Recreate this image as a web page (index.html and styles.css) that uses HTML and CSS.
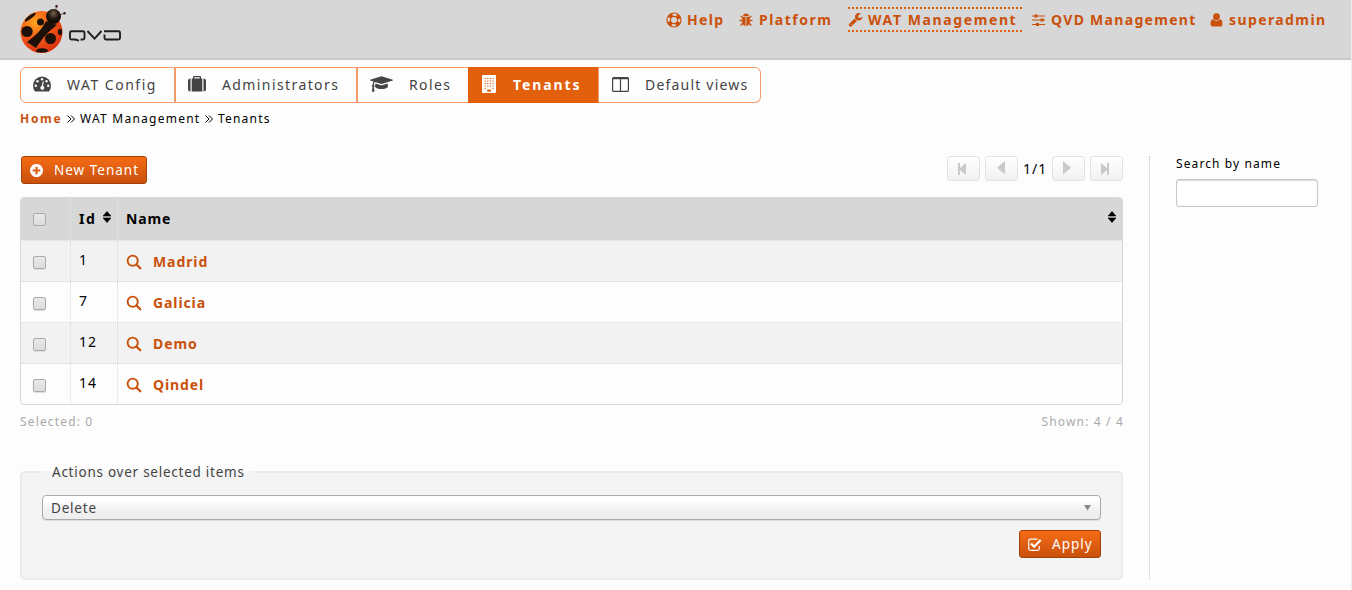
FILE: index.html
```html
<!DOCTYPE html>
<html lang="en">
<head>
<meta charset="utf-8">
<title>QVD WAT - Tenants</title>
<link rel="stylesheet" href="styles.css">
</head>
<body>
<svg class="defs" width="0" height="0">
  <defs>
    <symbol id="search" viewBox="0 0 16 16"><circle cx="6.700" cy="6.700" r="5.100" fill="none" stroke="currentColor" stroke-width="1.900"/><path d="M10.500 10.500l3.800 3.800" stroke="currentColor" stroke-width="2.300" stroke-linecap="round"/></symbol>
    <symbol id="sort" viewBox="0 0 8 12"><path d="M0 5L4 0.500L8 5zM0 7h8L4 11.500z" stroke="currentColor" stroke-width=".6" stroke-linejoin="round"/></symbol>
    <radialGradient id="shell" cx=".35" cy=".28" r=".8"><stop offset="0" stop-color="#ffa51c"/><stop offset=".45" stop-color="#f45b17"/><stop offset="1" stop-color="#d92d10"/></radialGradient>
    <radialGradient id="head" cx=".5" cy=".3" r=".6"><stop offset="0" stop-color="#75614f"/><stop offset=".6" stop-color="#20150d"/><stop offset="1" stop-color="#100b08"/></radialGradient>
    <clipPath id="shellclip"><circle cx="21.500" cy="27" r="20.500"/></clipPath>
  </defs>
</svg>

<header class="header">
  <svg class="logo" viewBox="0 0 102 50" width="102" height="50">
    <circle cx="21.500" cy="27" r="21" fill="url(#shell)"/>
    <g clip-path="url(#shellclip)" fill="#1c120b">
      <path d="M26 16L37 20C29 26 24 31 16 43L7 37C15 31 21 26 26 16z"/>
      <path d="M28 18.500C24 27 18 33 10.500 38.500M34 19C27 24 21 31 15 41" fill="none" stroke="#1c120b" stroke-width="1"/>
      <ellipse cx="7" cy="26.500" rx="5.700" ry="5.500"/>
      <circle cx="20.500" cy="17" r="3.500"/>
      <path d="M5 14Q10 7 16 8Q15 12 5 17z"/>
      <circle cx="30.500" cy="33.500" r="5.500"/>
      <circle cx="41" cy="27" r="3.200"/>
      <ellipse cx="22" cy="46" rx="6" ry="2.800"/>
    </g>
    <path d="M35 7L36.500 2M39 10L44 8.500" stroke="#796f69" stroke-width="1"/>
    <circle cx="36.500" cy="1.200" r="1.200" fill="#36150c"/><circle cx="44.500" cy="8.300" r="1.200" fill="#36150c"/>
    <circle cx="33.500" cy="11.500" r="7.500" fill="url(#head)"/>
    <g fill="none" stroke="#202020" stroke-width="1.900"><path d="M56.500 34.500H51.500Q50 34.500 50 33V28Q50 26.300 51.500 26.300H63Q64.500 26.300 64.500 28V33Q64.500 34.500 63 34.500H60.500M55 34.500L59 35.700"/><path d="M67.500 26L74.500 33.700L81.500 26"/><path d="M84.500 29.500V33Q84.500 34.500 86 34.500H98.500Q100 34.500 100 33V28Q100 26.300 98.500 26.300H84"/></g>
  </svg>
  <nav class="topnav">
    <a class="t-help"><svg width="16" height="16" viewBox="0 0 16 16" fill="none" stroke="currentColor"><circle cx="8" cy="8" r="7" stroke-width="1.200"/><circle cx="8" cy="8" r="3.600" stroke-width="1.200"/><circle cx="8" cy="8" r="5.300" stroke-width="3.600" stroke-dasharray="4.163 4.163" stroke-dashoffset="-2.081"/></svg><span>Help</span></a>
    <a class="t-platform"><svg width="14" height="14" viewBox="0 0 14 14" fill="currentColor"><path d="M4 3.300Q4.200.6 7 .6T10 3.300zM3.200 4h3.400v8.900Q3.200 12.700 3.200 9zM7.400 4h3.400v5Q10.800 12.700 7.400 12.900z"/><path d="M4 5L1.700 3M3.700 7.500H.5M4 10L1.700 12.500M10 5l2.300-2M10.300 7.500h3.200M10 10l2.300 2.500" stroke="currentColor" stroke-width="1.300" fill="none"/></svg><span>Platform</span></a>
    <a class="t-wat"><svg width="15" height="15" viewBox="0 0 1792 1792" fill="currentColor"><path d="M448 1472q0-26-19-45t-45-19-45 19-19 45 19 45 45 19 45-19 19-45zm644-420l-682 682q-37 37-90 37-52 0-91-37l-106-108q-38-36-38-90 0-53 38-91l681-681q39 98 114.500 173.500t173.500 114.500zm634-435q0 39-23 106-47 134-164.500 217.500t-258.500 83.500q-185 0-316.500-131.500t-131.500-316.500 131.500-316.500 316.500-131.500q58 0 121.500 16.500t107.500 46.500q16 11 16 28t-16 28l-293 169v224l193 107q5-3 79-48.500t135.500-81 70.500-35.500q15 0 23.500 10t8.500 25z"/></svg><span>WAT Management</span></a>
    <a class="t-qvd"><svg width="14" height="14" viewBox="0 0 14 14"><path d="M0 3h13M0 7h13M0 11.500h13" stroke="currentColor" stroke-width="1.200"/><path d="M2.500 1.500h3v3h-3zM8.500 5.500h3v3h-3zM4 10h3v3H4z" fill="currentColor"/></svg><span>QVD Management</span></a>
    <a class="t-user"><svg width="13" height="14" viewBox="0 0 13 14" fill="currentColor"><path d="M3.200 6.300Q4.500 7.800 6.500 7.800T9.800 6.300Q12.500 6.500 12.500 11Q12.500 13.500 10.500 13.500h-8Q.5 13.500.5 11Q.5 6.500 3.200 6.300z"/><circle cx="6.500" cy="3.700" r="3.400"/></svg><span>superadmin</span></a>
  </nav>
</header>

<nav class="tabs">
  <a class="tab tab-config"><svg width="18" height="16" viewBox="0 0 18 16"><path d="M2 15.500Q0 12.500 0 9.500A9 9 0 0 1 18 9.500Q18 12.500 16 15.500z" fill="currentColor"/><g fill="#fff"><circle cx="2.800" cy="9.800" r="1.200"/><circle cx="4.500" cy="5.300" r="1.200"/><circle cx="9" cy="3.300" r="1.200"/><circle cx="13.500" cy="5.300" r="1.200"/><circle cx="15.200" cy="9.800" r="1.200"/><path d="M9.800 5.500h1L10 10a2 2 0 1 1-1.300 0z"/></g></svg><span>WAT Config</span></a>
  <a class="tab tab-admin"><svg width="18" height="16" viewBox="0 0 18 16"><path d="M2.500 2.500v13Q0 15.500 0 13V5Q0 2.500 2.500 2.500zM15.500 2.500v13Q18 15.500 18 13V5Q18 2.500 15.500 2.500zM3.700 2.500H5V1Q5 0 6 0h6q1 0 1 1v1.500h1.300v13H3.700zM6.300 2.500h5.400V1.300H6.300z" fill="currentColor" fill-rule="evenodd"/></svg><span>Administrators</span></a>
  <a class="tab tab-roles"><svg width="23" height="18" viewBox="0 0 2304 1792" fill="currentColor"><path d="M1774 836l18 316q4 69-82 128t-235 93.500-323 34.500-323-34.500-235-93.500-82-128l18-316 574 181q22 7 48 7t48-7zm530-324q0 23-22 31l-1120 352q-4 1-10 1t-10-1l-652-206q-43 34-71 111.500t-34 178.500q63 36 63 109 0 69-58 107l58 433q2 14-8 25-9 11-24 11h-192q-15 0-24-11-10-11-8-25l58-433q-58-38-58-107 0-73 65-111 11-207 98-330l-333-104q-22-8-22-31t22-31l1120-352q4-1 10-1t10 1l1120 352q22 8 22 31z"/></svg><span>Roles</span></a>
  <a class="tab tab-tenants"><svg width="14" height="18" viewBox="0 0 14 18"><rect width="14" height="18" rx=".8" fill="#fff"/><path d="M2.500 3.500h9.500M2.500 6h9.500M2.500 8.500h9.500M2.500 11h9.500" stroke="#e25f0c" stroke-width="1.100" stroke-dasharray="1.300 1.300"/><path d="M2.500 13h1.200v1H2.500zM10.500 13h1.200v1h-1.200zM5.200 14.500h3.700v2.200H5.200z" fill="#e25f0c"/></svg><span>Tenants</span></a>
  <a class="tab tab-views"><svg width="17" height="15" viewBox="0 0 17 15"><path d="M1.500 0h14Q17 0 17 1.500v12Q17 15 15.500 15h-14Q0 15 0 13.500v-12Q0 0 1.500 0zM1.200 2.300v11.500h6.700V2.300zM9.100 2.300v11.500h6.700V2.300z" fill="currentColor" fill-rule="evenodd"/></svg><span>Default views</span></a>
</nav>

<div class="breadcrumb"><b>Home</b><svg width="8" height="8" viewBox="0 0 8 8"><path d="M.5.5L4 4L.5 7.500M4 .5L7.500 4L4 7.500"/></svg><span class="bc-wat">WAT Management</span><svg width="8" height="8" viewBox="0 0 8 8"><path d="M.5.5L4 4L.5 7.500M4 .5L7.500 4L4 7.500"/></svg><span class="bc-tenants">Tenants</span></div>

<div class="content">
  <main class="main">
    <div class="toolbar">
      <a class="button new"><svg width="13" height="13" viewBox="128 128 1536 1536" fill="#fff"><path d="M1344 960v-128q0-26-19-45t-45-19h-256v-256q0-26-19-45t-45-19h-128q-26 0-45 19t-19 45v256h-256q-26 0-45 19t-19 45v128q0 26 19 45t45 19h256v256q0 26 19 45t45 19h128q26 0 45-19t19-45v-256h256q26 0 45-19t19-45zm320-64q0 209-103 385.500t-279.500 279.500-385.500 103-385.500-103-279.500-279.500-103-385.500 103-385.500 279.500-279.500 385.500-103 385.500 103 279.500 279.500 103 385.500z"/></svg><span>New Tenant</span></a>
      <div class="pager">
        <a><svg width="33" height="25" viewBox="0 0 33 25"><path d="M11 7h2v5l6-5v12l-6-5v5h-2z"/></svg></a>
        <a><svg width="33" height="25" viewBox="0 0 33 25"><path d="M20 5v13.500l-8-6.700z"/></svg></a>
        <span>1/1</span>
        <a><svg width="33" height="25" viewBox="0 0 33 25"><path d="M11 5v13.500l8-6.700z"/></svg></a>
        <a><svg width="33" height="25" viewBox="0 0 33 25"><path d="M11 7v12l6-5v5h2V7h-2v5z"/></svg></a>
      </div>
    </div>
    <div class="grid">
      <div class="row head"><div class="c1"><i class="check"></i></div><div class="c2"><span>Id</span><svg width="8" height="12"><use href="#sort"/></svg></div><div class="c3"><span>Name</span><svg width="8" height="12"><use href="#sort"/></svg></div></div>
      <div class="row odd"><div class="c1"><i class="check"></i></div><div class="c2">1</div><div class="c3"><svg width="16" height="16"><use href="#search"/></svg><b>Madrid</b></div></div>
      <div class="row"><div class="c1"><i class="check"></i></div><div class="c2">7</div><div class="c3"><svg width="16" height="16"><use href="#search"/></svg><b>Galicia</b></div></div>
      <div class="row odd"><div class="c1"><i class="check"></i></div><div class="c2">12</div><div class="c3"><svg width="16" height="16"><use href="#search"/></svg><b>Demo</b></div></div>
      <div class="row"><div class="c1"><i class="check"></i></div><div class="c2">14</div><div class="c3"><svg width="16" height="16"><use href="#search"/></svg><b>Qindel</b></div></div>
    </div>
    <div class="counts"><span>Selected: 0</span><span class="shown">Shown: 4 / 4</span></div>
    <fieldset class="actions">
      <legend>Actions over selected items</legend>
      <div class="select"><span>Delete</span><svg width="7" height="6" viewBox="0 0 7 6"><path d="M0 0h7L3.500 5.500z" fill="#888"/></svg></div>
      <a class="button apply"><svg width="14" height="13" viewBox="0 0 14 13" fill="none" stroke="#fff"><path d="M9.500 1.200H2.500Q.7 1.200.7 3v7.500Q.7 12.300 2.500 12.300H9.500Q11.300 12.300 11.300 10.500V8" stroke-width="1.200"/><path d="M3 5.500l3.200 3.200L12.700 2" stroke-width="2.300"/></svg><span>Apply</span></a>
    </fieldset>
  </main>
  <aside class="side"><label>Search by name</label><input type="text"></aside>
</div>
</body>
</html>
```
FILE: styles.css
```css
* { box-sizing: border-box; }
body { margin: 0; width: 1352px; height: 590px; overflow: hidden; background: #fdfdfd; border-right: 1px solid #eee; font: 14px/20px "Noto Sans", "Open Sans", sans-serif; letter-spacing: 1px; color: #000; }
svg { flex: none; display: block; }
.defs { display: block; height: 0; }
span, b { white-space: nowrap; }
.header { height: 60px; background: #d7d7d7; border-bottom: 2px solid #cacaca; display: flex; justify-content: space-between; align-items: flex-start; padding: 5px 0 0 20px; }
.topnav { display: flex; color: #ca510b; font-weight: bold; margin-top: 2px; }
.topnav a { display: flex; align-items: center; height: 25px; border: 2px dotted transparent; border-width: 2px 0; }
.t-help { width: 73px; gap: 5px; letter-spacing: 1.3px; }
.t-platform { width: 109px; gap: 6px; letter-spacing: 1.5px; }
.t-wat { width: 174px; gap: 5px; margin-right: 10px; letter-spacing: 1.6px; }
.topnav .t-wat { border-color: #e25f0c; }
.t-qvd { width: 178px; gap: 5px; letter-spacing: 1.3px; }
.t-user { width: 141px; gap: 6px; letter-spacing: 1.4px; }
.tabs { display: flex; height: 36px; margin: 7px 0 0 20px; color: #444; }
.tab { display: flex; align-items: center; border: 1px solid #f39c67; padding-left: 12px; }
.tab svg { margin-top: -2px; }
.tab-config { width: 155px; border-radius: 6px 0 0 6px; gap: 16px; letter-spacing: 1.5px; }
.tab-admin { width: 182px; gap: 16px; letter-spacing: 1.4px; }
.tab-roles { width: 111px; gap: 16px; border-right: 0; letter-spacing: 1.4px; }
.tab-tenants { width: 131px; gap: 17px; font-weight: bold; color: #fff; background: #e25f0c; border-color: #e25f0c #f39c67 #e25f0c #e25f0c; padding-left: 13px; letter-spacing: 1.9px; }
.tab-tenants + .tab { border-left: 0; padding-left: 13px; }
.tab-views { width: 162px; gap: 16px; border-radius: 0 6px 6px 0; letter-spacing: 1.2px; }
.breadcrumb { display: flex; align-items: center; height: 18px; margin: 7px 0 0 20px; font-size: 12px; }
.breadcrumb b { color: #ca510b; width: 47px; letter-spacing: 1.7px; }
.breadcrumb svg { fill: none; stroke: #000; margin-right: 5px; }
.bc-wat { width: 125px; letter-spacing: 1.25px; }
.bc-tenants { letter-spacing: 1.2px; }
.content { display: flex; margin: 28px 0 0 20px; }
.main { width: 1103px; }
.toolbar { display: flex; justify-content: space-between; height: 41px; align-items: flex-start; }
.button { display: flex; align-items: center; height: 28px; border: 1px solid #a14208; border-radius: 3px; color: #fff; background: linear-gradient(#f56b15, #c9510c); font-size: 13.500px; letter-spacing: 1px; }
.new { width: 126px; margin-left: 1px; padding-left: 8px; gap: 11px; }
.pager { display: flex; align-items: center; }
.pager a { width: 33px; height: 25px; border: 1px solid #e3e3e3; border-radius: 3px; background: linear-gradient(#fff, #f1f1f1); }
.pager svg { margin: -1px; fill: #c9c9c9; }
.pager a + a { margin-left: 5px; }
.pager span { width: 34px; padding-left: 5px; font-size: 14px; }
.grid { height: 208px; border: 1px solid #d7d7d7; border-radius: 4px; overflow: hidden; }
.row { display: flex; height: 41px; border-bottom: 1px dotted #d5d5d5; }
.row:last-child { border-bottom: 0; }
.row.head { height: 43px; background: #d7d7d7; font-weight: bold; border-color: #f2f2f2; }
.odd { background: #f2f2f2; }
.c1 { width: 50px; border-right: 1px dotted #d9d9d9; padding: 15px 0 0 12px; }
.c2 { width: 47px; border-right: 1px dotted #d9d9d9; padding: 9px 6px 0 8px; display: flex; justify-content: space-between; }
.c3 { flex: 1; display: flex; align-items: flex-start; padding: 11px 0 0 8px; gap: 11px; color: #ca510b; }
.c3 svg { margin-top: 2px; }
.row b { letter-spacing: .9px; }
.head .c1, .head .c2 { border-color: #e7e7e7; }
.head .c2, .head .c3 { padding-top: 11px; color: #000; }
.head .c2 span { letter-spacing: 1.6px; }
.head .c3 { justify-content: space-between; padding-right: 6px; letter-spacing: .9px; }
.head .c2 svg, .head .c3 svg { margin-top: 2px; }
.check { display: block; width: 13px; height: 13px; border: 1px solid #aaa; border-radius: 2px; background: linear-gradient(#e9e9e9, #dcdcdc); box-shadow: 0 1px 1px #ddd; }
.counts { display: flex; justify-content: space-between; font-size: 12px; color: #aaa; margin-top: 7px; height: 20px; letter-spacing: 1.15px; }
.shown { margin-right: -1px; }
.actions { width: 1103px; height: 118px; margin: 30px 0 0; padding: 13px 20px 0; border: 2px solid #ebebeb; border-radius: 5px; background: #f4f4f4; color: #444; }
.actions legend { height: 20px; padding: 0 8px 0 10px; font-size: 13.500px; letter-spacing: .75px; }
.select { display: flex; align-items: center; justify-content: space-between; height: 25px; padding: 0 9px 0 8px; border: 1px solid #aaa; border-radius: 4px; background: linear-gradient(#fff 20%, #f0f0f0 60%, #eee); box-shadow: 0 1px 1px #ddd; font-size: 13.500px; letter-spacing: .8px; }
.apply { width: 82px; margin: 10px 0 0 auto; padding-left: 8px; gap: 10px; }
.side { width: 202px; height: 424px; margin-left: 26px; padding-left: 26px; border-left: 1px dotted #c5c5c5; }
.side label { display: block; font-size: 12px; height: 23px; line-height: 16px; letter-spacing: 1.1px; }
.side input { display: block; width: 142px; height: 28px; padding: 0; border: 1px solid #c6c6c6; border-radius: 3px; background: #fff; box-shadow: inset 0 1px 1px #ddd; }
```
